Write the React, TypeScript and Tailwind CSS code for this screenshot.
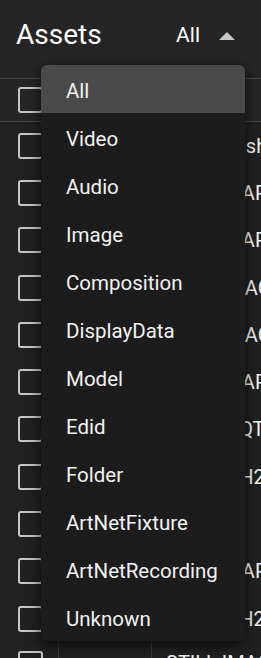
import React from 'react';

const FILTERS = [
  'All',
  'Video',
  'Audio',
  'Image',
  'Composition',
  'DisplayData',
  'Model',
  'Edid',
  'Folder',
  'ArtNetFixture',
  'ArtNetRecording',
  'Unknown',
];

const ROWS = [
  'IntroSplash',
  'VIDEO HAP',
  'VIDEO HAP',
  'STILL IMAGE',
  'STILL IMAGE',
  'VIDEO HAP',
  'VIDEOS QT',
  'VIDEOS H264',
  'FOLDER',
  'VIDEO HAP',
  'VIDEOS H264',
  'STILL IMAGE',
];

function Checkbox() {
  return <div className="w-[25px] h-[26px] border-[2.5px] border-[#c6c6c6] rounded-[3px]" />;
}

function Row({ text, header, last }: { text?: string; header?: boolean; last?: boolean }) {
  return (
    <div
      className={`flex ${header ? 'h-[43px] border-b border-[#474747] bg-[#262626]' : 'h-[47.3px] bg-[#212121]'}`}
    >
      <div className={`w-[58px] shrink-0 flex pl-[18px] ${last ? 'items-start pt-[9px]' : 'items-center'}`}>
        <Checkbox />
      </div>
      <div className="w-[93px] shrink-0 border-l border-[#3c3c3c]" />
      <div
        className={`flex-1 min-w-0 border-l border-[#3c3c3c] flex pl-[14px] overflow-hidden ${last ? 'items-start pt-[6px]' : 'items-center'}`}
      >
        <span className="text-[20px] text-[#f2f2f2] whitespace-nowrap">{text}</span>
      </div>
    </div>
  );
}

export default function App() {
  return (
    <div
      className="relative w-[261px] h-[658px] overflow-hidden bg-[#222222]"
      style={{ fontFamily: 'Roboto, "Liberation Sans", sans-serif' }}
    >
      {/* Title bar */}
      <div className="h-[79px] flex items-center justify-between pl-4 pr-[26px] bg-[#252525] border-b border-[#474747]">
        <span className="text-[28px] text-white pb-[8px]">Assets</span>
        <div className="flex items-center gap-[19px] pb-[6px]">
          <span className="text-[21px] text-white">All</span>
          <svg width="16" height="8" viewBox="0 0 16 8">
            <path d="M0 8 L8 0 L16 8 Z" fill="#c8c8c8" />
          </svg>
        </div>
      </div>

      {/* Table */}
      <Row header />
      {ROWS.map((r, i) => (
        <Row key={i} text={r} last={i === ROWS.length - 1} />
      ))}

      {/* Filter menu */}
      <div className="absolute left-[41px] top-[65px] w-[204px] bg-[#1c1c1c] rounded-[6px] overflow-hidden shadow-[0_4px_14px_rgba(0,0,0,0.7)]">
        {FILTERS.map((f, i) => (
          <div
            key={f}
            className={`h-12 flex items-center pl-[25px] pt-1 text-[20.5px] text-[#f2f2f2] ${i === 0 ? 'bg-[#4a4a4a]' : ''}`}
          >
            {f}
          </div>
        ))}
      </div>
    </div>
  );
}
